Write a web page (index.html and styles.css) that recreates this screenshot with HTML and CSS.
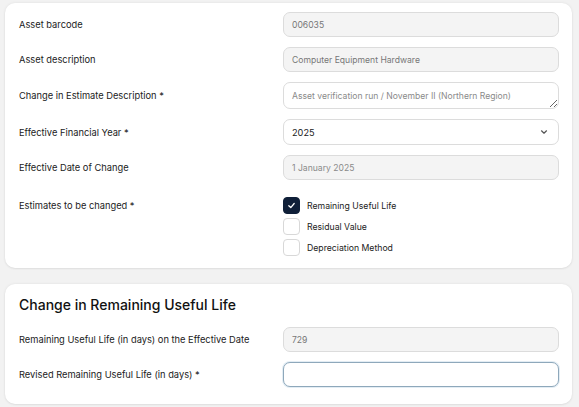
FILE: index.html
```html
<!DOCTYPE html>
<html>
<head>
<meta charset="utf-8">
<link rel="stylesheet" href="styles.css">
</head>
<body>
<div class="page">
  <section class="card card-main">
    <div class="row">
      <label class="label">Asset barcode</label>
      <input class="field disabled" value="006035" readonly>
    </div>
    <div class="row">
      <label class="label">Asset description</label>
      <input class="field disabled" value="Computer Equipment Hardware" readonly>
    </div>
    <div class="row">
      <label class="label">Change in Estimate Description *</label>
      <textarea class="field area" placeholder="Asset verification run / November II (Northern Region)"></textarea>
    </div>
    <div class="row">
      <label class="label">Effective Financial Year *</label>
      <div class="select">
        <span class="select-value">2025</span>
        <svg class="chev" width="10" height="10" viewBox="0 0 10 10"><path d="M2.5 3.8 L5 6.2 L7.5 3.8" fill="none" stroke="#555" stroke-width="1.2" stroke-linecap="round" stroke-linejoin="round"/></svg>
      </div>
    </div>
    <div class="row">
      <label class="label">Effective Date of Change</label>
      <input class="field disabled light" value="1 January 2025" readonly>
    </div>
    <div class="row row-top">
      <label class="label label-check">Estimates to be changed *</label>
      <div class="checks">
        <div class="check-item">
          <span class="box checked"><svg width="9" height="9" viewBox="0 0 10 10"><path d="M2 5.2 L4.2 7.3 L8 2.8" fill="none" stroke="#fff" stroke-width="1.4" stroke-linecap="round" stroke-linejoin="round"/></svg></span>
          <span class="check-label">Remaining Useful Life</span>
        </div>
        <div class="check-item">
          <span class="box"></span>
          <span class="check-label">Residual Value</span>
        </div>
        <div class="check-item">
          <span class="box"></span>
          <span class="check-label">Depreciation Method</span>
        </div>
      </div>
    </div>
  </section>
  <section class="card card-second">
    <h2 class="title">Change in Remaining Useful Life</h2>
    <div class="row">
      <label class="label">Remaining Useful Life (in days) on the Effective Date</label>
      <input class="field disabled" value="729" readonly>
    </div>
    <div class="row">
      <label class="label">Revised Remaining Useful Life (in days) *</label>
      <input class="field focus" value="">
    </div>
  </section>
</div>
</body>
</html>
```
FILE: styles.css
```css
* { box-sizing: border-box; }
html, body { margin: 0; padding: 0; }
body {
  background: #f2f2f2;
  font-family: Inter, "Noto Sans", sans-serif;
  color: #1c1c1c;
  width: 579px;
  height: 407px;
  overflow: hidden;
}
.page {
  padding: 3px 7px 0 5px;
  display: flex;
  flex-direction: column;
  gap: 16px;
}
.card {
  background: #fff;
  border-radius: 10px;
  box-shadow: 0 0 3px rgba(0,0,0,0.08), 0 1px 2px rgba(0,0,0,0.05);
  padding: 9px 13px 12px 14px;
  display: flex;
  flex-direction: column;
  gap: 10px;
}
.card-second {
  padding: 12px 13px 17px 14px;
  gap: 10px;
}
.row {
  display: grid;
  grid-template-columns: 264px 1fr;
  align-items: center;
}
.row-top { align-items: start; margin-top: 7px; }
.label {
  font-size: 9.3px;
  color: #222;
}
.label-check { padding-top: 3px; }
.field {
  height: 25px;
  width: 100%;
  border: 1px solid #dcdcdc;
  border-radius: 7px;
  padding: 0 8px;
  font-family: Inter, "Noto Sans", sans-serif;
  font-size: 8.6px;
  color: #6e6e6e;
  background: #fff;
  outline: none;
}
.disabled { background: #f4f4f4; color: #777; }
.light { color: #8a8a8a; }
.area {
  height: 27px;
  resize: vertical;
  padding-top: 7px;
  line-height: 12px;
  display: block;
}
.area::placeholder { color: #8a8a8a; }
.focus {
  border-color: #8ea8bb;
  box-shadow: 0 0 0 1px #e3edf4;
}
.select {
  height: 26px;
  border: 1px solid #dcdcdc;
  border-radius: 7px;
  padding: 0 9px 0 8px;
  display: flex;
  align-items: center;
  justify-content: space-between;
  background: #fff;
}
.select-value { font-size: 9.2px; color: #222; }
.chev { display: block; }
.checks {
  display: flex;
  flex-direction: column;
  gap: 4px;
}
.check-item {
  display: flex;
  align-items: center;
  gap: 7px;
}
.box {
  width: 17px;
  height: 17px;
  border: 1px solid #d8d8d8;
  border-radius: 4px;
  background: #fff;
  display: flex;
  align-items: center;
  justify-content: center;
}
.box.checked {
  background: #0f1f38;
  border-color: #0f1f38;
}
.check-label { font-size: 8.7px; color: #222; }
.title {
  margin: 0 0 4px 0;
  font-size: 14px;
  font-weight: 500;
  color: #111;
  line-height: 17px;
}
```
